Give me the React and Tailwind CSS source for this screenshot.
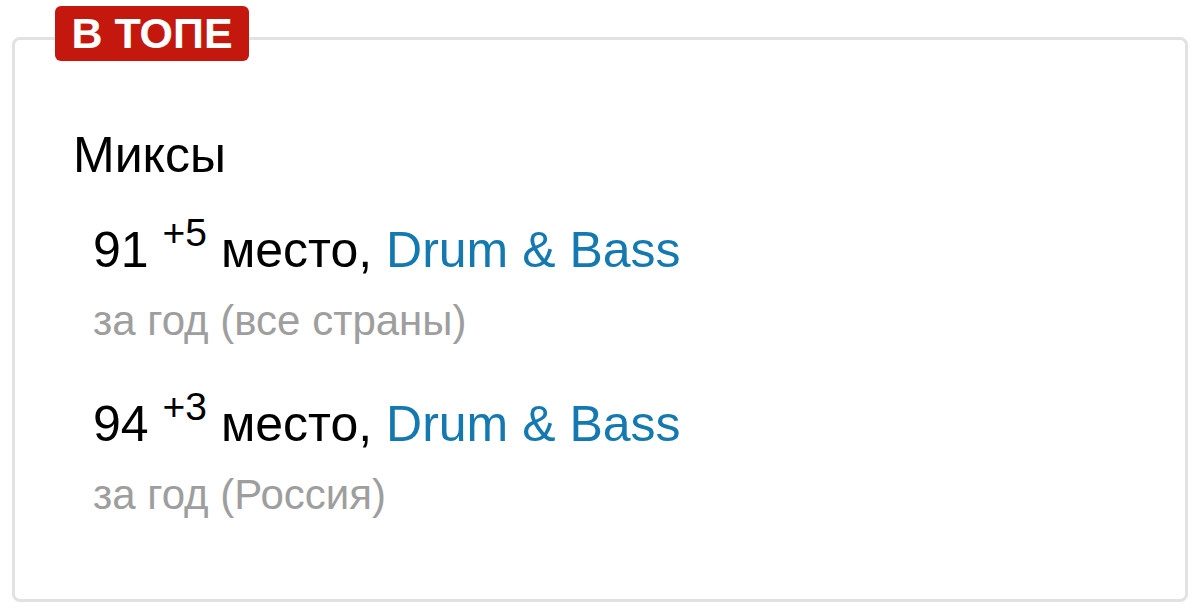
import React from 'react';

const entries = [
  { place: 91, delta: '+5', genre: 'Drum & Bass', note: 'за год (все страны)' },
  { place: 94, delta: '+3', genre: 'Drum & Bass', note: 'за год (Россия)' },
];

export default function App() {
  return (
    <div className="w-[1200px] h-[612px] bg-white pt-[37px] px-[12px]" style={{ fontFamily: '"Liberation Sans", Arial, sans-serif' }}>
      <div className="relative h-[565px] border-[3px] border-[#e2e2e2] rounded-[8px] pl-[58px] pt-[87px]">
        {/* badge over the top border */}
        <div className="absolute left-[40px] top-[-34px] w-[194px] h-[55px] rounded-[6px] bg-[#c4180f] flex items-center justify-center">
          <span className="text-white font-bold text-[43px] leading-none">В ТОПЕ</span>
        </div>

        <h2 className="text-[50px] leading-[56px] text-black">Миксы</h2>

        <div className="pl-[20px] mt-[37px] flex flex-col gap-[48px]">
          {entries.map((e) => (
            <div key={e.place} className="flex flex-col gap-[12px]">
              <div className="text-[50px] leading-[60px] text-black whitespace-nowrap">
                {e.place} <span className="relative top-[-21px] text-[39px]">{e.delta}</span> место,{' '}
                <a href="#" className="text-[#1479b0]">{e.genre}</a>
              </div>
              <div className="text-[42px] leading-[50px] text-[#9e9e9e] whitespace-nowrap">{e.note}</div>
            </div>
          ))}
        </div>
      </div>
    </div>
  );
}
